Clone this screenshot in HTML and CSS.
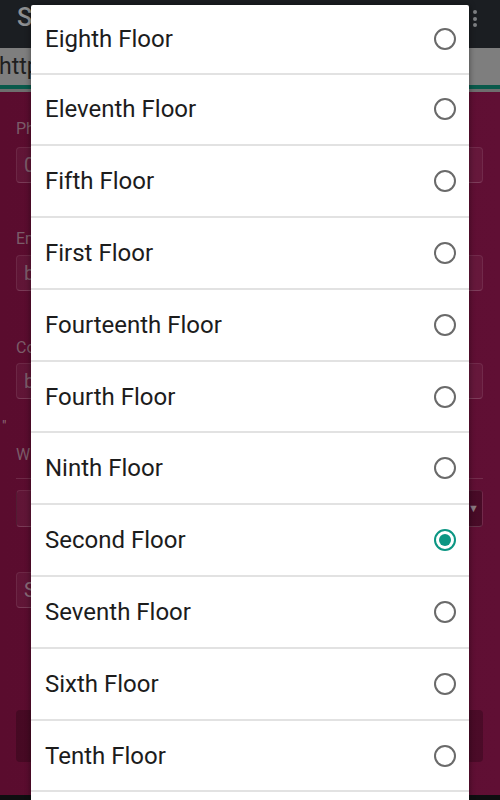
FILE: index.html
```html
<!DOCTYPE html>
<html>
<head>
<meta charset="utf-8">
<link rel="stylesheet" href="styles.css">
</head>
<body>
<div class="page">
  <header class="appbar">
    <span class="app-title">S</span>
    <span class="menu-dots"><i></i><i></i><i></i></span>
  </header>
  <div class="urlbar"><span class="url-text">http</span></div>
  <div class="accent"></div>
  <main class="content">
    <div class="label l1">Ph</div>
    <div class="field f1"><span>0</span></div>
    <div class="label l2">Em</div>
    <div class="field f2"><span>b</span></div>
    <div class="label l3">Co</div>
    <div class="field f3"><span>b</span></div>
    <div class="quote">"</div>
    <div class="label lw">W</div>
    <div class="rule"></div>
    <div class="field select"><span class="caret">▼</span></div>
    <div class="field short"><span>S</span></div>
    <div class="button-dark"></div>
  </main>
  <div class="navstrip"></div>
</div>

<div class="dialog">
  <ul class="options">
    <li class="option"><span>Eighth Floor</span><span class="radio"></span></li>
    <li class="option"><span>Eleventh Floor</span><span class="radio"></span></li>
    <li class="option"><span>Fifth Floor</span><span class="radio"></span></li>
    <li class="option"><span>First Floor</span><span class="radio"></span></li>
    <li class="option"><span>Fourteenth Floor</span><span class="radio"></span></li>
    <li class="option"><span>Fourth Floor</span><span class="radio"></span></li>
    <li class="option"><span>Ninth Floor</span><span class="radio"></span></li>
    <li class="option"><span>Second Floor</span><span class="radio checked"></span></li>
    <li class="option"><span>Seventh Floor</span><span class="radio"></span></li>
    <li class="option"><span>Sixth Floor</span><span class="radio"></span></li>
    <li class="option"><span>Tenth Floor</span><span class="radio"></span></li>
  </ul>
</div>
</body>
</html>
```
FILE: styles.css
```css
html, body {
  margin: 0;
  padding: 0;
}
body {
  width: 500px;
  height: 800px;
  overflow: hidden;
  position: relative;
  font-family: Roboto, "Noto Sans", "Liberation Sans", sans-serif;
  background: #5c0d30;
}
.page {
  display: flex;
  flex-direction: column;
  height: 800px;
}
.appbar {
  height: 48px;
  flex: none;
  background: #1b1e22;
  display: flex;
  align-items: flex-start;
  justify-content: space-between;
  padding: 0 0 0 17px;
  box-sizing: border-box;
}
.app-title {
  color: #8e9093;
  font-size: 25px;
  font-weight: 500;
  line-height: 36px;
}
.menu-dots {
  display: flex;
  flex-direction: column;
  gap: 2.5px;
  padding: 10px 23px 0 0;
}
.menu-dots i {
  width: 4px;
  height: 4px;
  border-radius: 50%;
  background: #7d7f82;
}
.urlbar {
  height: 37px;
  flex: none;
  background: #7e7e7e;
  display: flex;
  align-items: center;
  overflow: hidden;
}
.url-text {
  color: #1f1f1f;
  font-size: 23px;
  margin-left: -1px;
}
.accent {
  height: 4px;
  flex: none;
  background: #0a5a4b;
  border-bottom: 3px solid #6e6e6e;
}
.content {
  flex: 1;
  background: linear-gradient(90deg, #5a0c2e 0%, #600f34 100%);
  padding: 0 17px 0 16px;
  display: flex;
  flex-direction: column;
}
.label {
  color: #7b5c69;
  font-size: 16px;
  line-height: 20px;
  height: 20px;
  flex: none;
}
.l1 { margin-top: 27px; }
.l2 { margin-top: 46px; }
.l3 { margin-top: 47px; }
.field {
  height: 36px;
  flex: none;
  box-sizing: border-box;
  border: 1px solid rgba(255, 255, 255, 0.08);
  border-bottom-color: rgba(255, 255, 255, 0.16);
  background: rgba(255, 255, 255, 0.04);
  border-radius: 4px;
  color: #7b5c69;
  font-size: 20px;
  line-height: 34px;
  padding-left: 7px;
  display: flex;
  align-items: center;
}
.f1 { margin-top: 8px; }
.f2 { margin-top: 6px; }
.f3 { margin-top: 5px; }
.quote {
  color: #8a6a78;
  font-size: 14px;
  line-height: 14px;
  height: 14px;
  flex: none;
  margin: 20px 0 0 -14px;
}
.label.lw {
  margin-top: 12px;
}
.rule {
  height: 1px;
  flex: none;
  background: rgba(255, 255, 255, 0.12);
  margin-top: 13px;
}
.field.select {
  margin-top: 11px;
  height: 37px;
  justify-content: flex-end;
  background: linear-gradient(90deg, rgba(255,255,255,0.04) 0%, rgba(255,255,255,0.04) 85%, rgba(0,0,0,0.25) 90%);
  padding-right: 3px;
}
.caret {
  color: #8a7a82;
  font-size: 11px;
  line-height: 11px;
}
.field.short {
  margin-top: 45px;
  width: 420px;
  color: #8a6a78;
}
.button-dark {
  margin-top: 102px;
  height: 52px;
  flex: none;
  border-radius: 4px;
  background: rgba(0, 0, 0, 0.22);
}
.navstrip {
  height: 5px;
  flex: none;
  background: #0e0e10;
}

.dialog {
  position: absolute;
  left: 31px;
  top: 5px;
  width: 438px;
  bottom: 0;
  background: #ffffff;
  border-radius: 2px 2px 0 0;
  box-shadow: 0 0 6px rgba(0, 0, 0, 0.45);
  overflow: hidden;
}
.options {
  list-style: none;
  margin: 0;
  padding: 0;
}
.option {
  height: 69.8px;
  border-bottom: 2px solid #e2e2e2;
  display: flex;
  align-items: center;
  justify-content: space-between;
  padding: 0 13px 0 14px;
  font-size: 24px;
  color: #1c1c1c;
}
.option:first-child {
  height: 67.5px;
}
.radio {
  width: 22px;
  height: 22px;
  box-sizing: border-box;
  border: 2px solid #6a6a6a;
  border-radius: 50%;
  position: relative;
  flex: none;
}
.radio.checked {
  border-color: #0b9683;
}
.radio.checked::after {
  content: "";
  position: absolute;
  left: 3px;
  top: 3px;
  width: 12px;
  height: 12px;
  border-radius: 50%;
  background: #0b9683;
}
```
